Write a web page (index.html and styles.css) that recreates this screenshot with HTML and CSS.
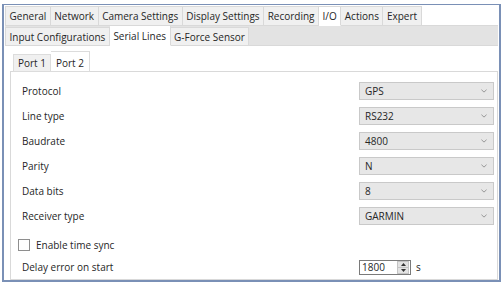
FILE: index.html
```html
<!DOCTYPE html>
<html lang="en">
  <head>
    <meta charset="UTF-8" />
    <title>Settings - I/O - Serial Lines</title>
    <link rel="stylesheet" href="styles.css">
  </head>
  <body>
    <div class="frame">
      <!-- main tabs -->
      <div class="tabs main-tabs">
        <div class="tab">General</div>
        <div class="tab">Network</div>
        <div class="tab">Camera Settings</div>
        <div class="tab">Display Settings</div>
        <div class="tab">Recording</div>
        <div class="tab active">I/O</div>
        <div class="tab">Actions</div>
        <div class="tab">Expert</div>
      </div>

      <!-- I/O sub tabs -->
      <div class="tabs sub-tabs">
        <div class="tab">Input Configurations</div>
        <div class="tab active">Serial Lines</div>
        <div class="tab">G-Force Sensor</div>
      </div>

      <div class="page">
        <div class="tabs port-tabs">
          <div class="tab">Port 1</div>
          <div class="tab active">Port 2</div>
        </div>

        <div class="panel">
          <div class="form">
            <label class="label">Protocol</label>
            <div class="combo"><span>GPS</span><svg viewBox="0 0 7 4"><path d="M0.5 0.5 L3.5 3.3 L6.5 0.5" /></svg></div>

            <label class="label">Line type</label>
            <div class="combo"><span>RS232</span><svg viewBox="0 0 7 4"><path d="M0.5 0.5 L3.5 3.3 L6.5 0.5" /></svg></div>

            <label class="label">Baudrate</label>
            <div class="combo"><span>4800</span><svg viewBox="0 0 7 4"><path d="M0.5 0.5 L3.5 3.3 L6.5 0.5" /></svg></div>

            <label class="label">Parity</label>
            <div class="combo"><span>N</span><svg viewBox="0 0 7 4"><path d="M0.5 0.5 L3.5 3.3 L6.5 0.5" /></svg></div>

            <label class="label">Data bits</label>
            <div class="combo"><span>8</span><svg viewBox="0 0 7 4"><path d="M0.5 0.5 L3.5 3.3 L6.5 0.5" /></svg></div>

            <label class="label">Receiver type</label>
            <div class="combo"><span>GARMIN</span><svg viewBox="0 0 7 4"><path d="M0.5 0.5 L3.5 3.3 L6.5 0.5" /></svg></div>
          </div>

          <div class="check-row">
            <span class="checkbox"></span>
            <span>Enable time sync</span>
          </div>

          <div class="delay-row">
            <span class="label">Delay error on start</span>
            <div class="spin-wrap">
              <div class="spin">
                <span class="spin-value">1800</span>
                <span class="spin-buttons">
                  <span class="spin-btn"><svg viewBox="0 0 5 3"><path d="M0 3 L2.5 0 L5 3 Z" /></svg></span>
                  <span class="spin-btn"><svg viewBox="0 0 5 3"><path d="M0 0 L2.5 3 L5 0 Z" /></svg></span>
                </span>
              </div>
              <span class="unit">s</span>
            </div>
          </div>
        </div>
      </div>
    </div>
  </body>
</html>
```

FILE: styles.css
```css
:root {
  --frame: #7a90b6;
  --tab-border: #d9d9d9;
  --tab-bg: #f0f0f0;
  --band-bg: #e3e3e3;
  --text: #262626;
  --combo-bg: #e7e7e7;
  --combo-border: #c9c9c9;
}

* {
  margin: 0;
  padding: 0;
  box-sizing: border-box;
}

body {
  background: #ffffff;
  color: var(--text);
  font-family: "Open Sans", "Noto Sans", sans-serif;
  font-size: 10px;
}

.frame {
  margin: 4px 0 0 2px;
  width: 499px;
  height: 278px;
  border: 2px solid var(--frame);
  border-top-width: 1px;
  display: flex;
  flex-direction: column;
  padding-left: 1px;
}

/* tab rows */
.tabs {
  display: flex;
  align-items: flex-end;
}

.tab {
  height: 20px;
  padding: 0 3.5px;
  line-height: 19px;
  background: var(--tab-bg);
  border: 1px solid var(--tab-border);
  border-left-width: 0;
  white-space: nowrap;
}

.tab:first-child {
  border-left-width: 1px;
}

.tab.active {
  background: #ffffff;
  border-bottom-color: #ffffff;
}

.main-tabs {
  height: 21px;
  border-bottom: 1px solid var(--tab-border);
  margin-right: 1px;
}

.main-tabs .tab {
  margin-bottom: -1px;
}

.sub-tabs {
  height: 20px;
  background: var(--band-bg);
  border-bottom: 1px solid var(--tab-border);
  margin-right: 1px;
}

.sub-tabs .tab {
  height: 19px;
  margin-bottom: -1px;
}

.sub-tabs .tab.active {
  height: 21px;
  line-height: 20px;
}

/* port page */
.page {
  flex: 1;
  display: flex;
  flex-direction: column;
  padding: 5px 1px 0 5px;
}

.port-tabs {
  padding-left: 3px;
  position: relative;
  z-index: 1;
}

.port-tabs .tab {
  height: 18px;
  line-height: 17px;
  padding: 0 4px;
  margin-bottom: -1px;
  border-color: #dcdcdc;
}

.port-tabs .tab.active {
  height: 21px;
  line-height: 22px;
  padding: 0 5px;
}

.panel {
  flex: 1;
  border: 1px solid var(--tab-border);
  padding: 10px 3px 0 11px;
}

.form {
  display: grid;
  grid-template-columns: 1fr 135px;
  grid-auto-rows: 18px;
  row-gap: 7px;
  align-items: center;
}

.combo {
  height: 18px;
  background: var(--combo-bg);
  border: 1px solid var(--combo-border);
  display: flex;
  align-items: center;
  justify-content: space-between;
  padding: 0 6px 0 5px;
}

.combo svg {
  width: 6px;
  height: 4px;
  fill: none;
  stroke: #8a8a8a;
  stroke-width: 1;
}

.check-row {
  display: flex;
  align-items: center;
  gap: 6px;
  margin: 14px 0 0 -4px;
  height: 12px;
}

.checkbox {
  width: 12px;
  height: 12px;
  border: 1px solid #8e8e8e;
  background: #ffffff;
}

.delay-row {
  display: flex;
  align-items: center;
  justify-content: space-between;
  margin-top: 8px;
  height: 16px;
}

.spin-wrap {
  display: flex;
  align-items: center;
  gap: 5px;
  width: 135px;
}

.spin {
  width: 52px;
  height: 15px;
  border: 1px solid #7a7a7a;
  display: flex;
  align-items: center;
  justify-content: space-between;
  padding-left: 2px;
}

.spin-value {
  line-height: 13px;
}

.spin-buttons {
  display: flex;
  flex-direction: column;
  width: 12px;
  height: 13px;
  margin-right: 1px;
}

.spin-btn {
  flex: 1;
  background: #e3e3e3;
  border: 1px solid #c4c4c4;
  display: flex;
  align-items: center;
  justify-content: center;
}

.spin-btn + .spin-btn {
  border-top-width: 0;
}

.spin-btn svg {
  width: 5px;
  height: 3px;
  fill: #333333;
}
```
